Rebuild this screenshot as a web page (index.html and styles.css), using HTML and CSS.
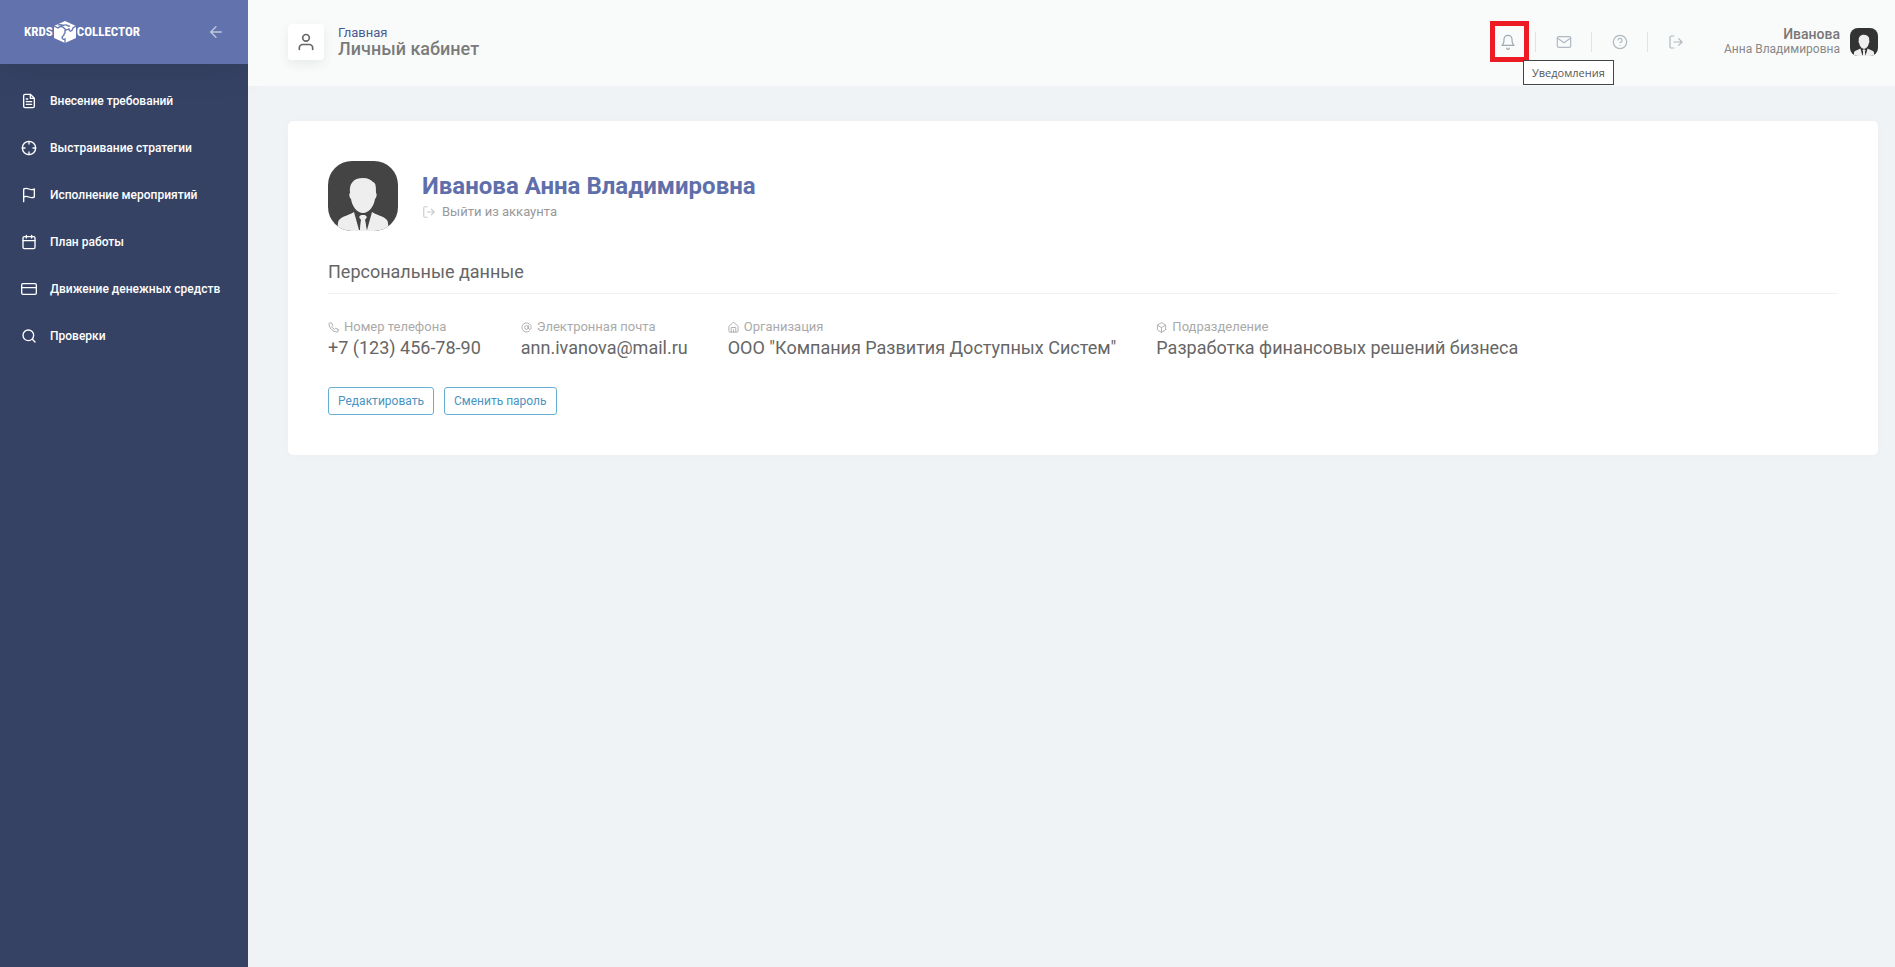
FILE: index.html
```html
<!DOCTYPE html>
<html lang="ru">
<head>
<meta charset="utf-8">
<title>Личный кабинет</title>
<link rel="stylesheet" href="styles.css">
</head>
<body>
<svg class="defs" width="0" height="0" aria-hidden="true">
  <symbol id="avatar" viewBox="0 0 70 70">
    <path class="portrait" d="M35 17c5 0 8 2 10 4 3 1 3 5 3 11 1 0 1 4-1 6-1 7-6 14-12 14s-11-7-12-14c-2-2-2-6-1-6-1-9 3-15 13-15z"/>
    <path class="portrait" d="M26 51l5 18h1l1-10-2-3 2-2h4l2 2-2 3 1 10h1l5-18c4 3 12 4 15 8 2 3 1 11 1 11H10s-1-8 1-11c3-4 11-5 15-8z"/>
    <path class="portrait" d="M33 59h4l2 11h-7z"/>
  </symbol>
  <symbol id="logout" viewBox="0 0 24 24"><path d="M9 21H5a2 2 0 0 1-2-2V5a2 2 0 0 1 2-2h4M16 17l5-5-5-5M21 12H9"/></symbol>
</svg>
<div class="app">
  <aside class="sidebar">
    <div class="brand">
      <a class="logo" href="#"><span>KRDS</span>
        <svg class="cube" viewBox="0 0 22 22" aria-hidden="true">
          <path class="cube-face" d="M11 0l11 5v12l-11 5-11-5V5z"/>
          <path class="cube-line" d="M0 5l4 2c2-2 4-2 6 0l2 2 3-1c0 3 3 3 4-1l3-2M4 4c3-1 4 1 7 0s2 2 5 1M11 22v-4c-2 1-4-1-2-3 2-1 0-2 2-3V9"/>
        </svg><span>COLLECTOR</span></a>
      <button class="collapse" type="button" aria-label="Свернуть меню"><svg class="icon" viewBox="0 0 24 24"><path d="M20 12H4M12 20l-8-8 8-8"/></svg></button>
    </div>
    <nav class="menu">
      <a href="#"><svg class="icon" viewBox="0 0 24 24"><path d="M14 2H6a2 2 0 0 0-2 2v16a2 2 0 0 0 2 2h12a2 2 0 0 0 2-2V8zM14 2v6h6M16 13H8M16 17H8M10 9H8"/></svg>Внесение требований</a>
      <a href="#"><svg class="icon" viewBox="0 0 24 24"><circle cx="12" cy="12" r="10"/><path d="M22 12h-4M6 12H2M12 6V2M12 22v-4"/></svg>Выстраивание стратегии</a>
      <a href="#"><svg class="icon" viewBox="0 0 24 24"><path d="M4 15s1-1 4-1 5 2 8 2 4-1 4-1V3s-1 1-4 1-5-2-8-2-4 1-4 1zM4 22v-7"/></svg>Исполнение мероприятий</a>
      <a href="#"><svg class="icon" viewBox="0 0 24 24"><rect x="3" y="4" width="18" height="18" rx="2"/><path d="M16 2v4M8 2v4M3 10h18"/></svg>План работы</a>
      <a href="#"><svg class="icon" viewBox="0 0 24 24"><rect x="1" y="4" width="22" height="16" rx="2"/><path d="M1 10h22"/></svg>Движение денежных средств</a>
      <a href="#"><svg class="icon" viewBox="0 0 24 24"><circle cx="11" cy="11" r="8"/><path d="M21 21l-4-4"/></svg>Проверки</a>
    </nav>
  </aside>
  <div class="page">
    <header class="topbar">
      <div class="page-icon"><svg class="icon" viewBox="0 0 24 24"><path d="M20 21v-2a4 4 0 0 0-4-4H8a4 4 0 0 0-4 4v2"/><circle cx="12" cy="7" r="4"/></svg></div>
      <div class="heading">
        <a href="#">Главная</a>
        <h1>Личный кабинет</h1>
      </div>
      <div class="actions">
        <button class="marked" type="button" aria-label="Уведомления"><svg class="icon" viewBox="0 0 24 24"><path d="M18 8A6 6 0 0 0 6 8c0 7-3 9-3 9h18s-3-2-3-9M14 21a2 2 0 0 1-4 0"/></svg><span class="tooltip" role="tooltip">Уведомления</span></button>
        <button type="button" aria-label="Сообщения"><svg class="icon" viewBox="0 0 24 24"><rect x="2" y="4" width="20" height="16" rx="2"/><path d="M22 6l-10 7L2 6"/></svg></button>
        <button type="button" aria-label="Помощь"><svg class="icon" viewBox="0 0 24 24"><circle cx="12" cy="12" r="10"/><path d="M9 9a3 3 0 0 1 6 1c0 2-3 3-3 3M12 17h.01"/></svg></button>
        <button type="button" aria-label="Выйти"><svg class="icon" viewBox="0 0 24 24"><use href="#logout"/></svg></button>
      </div>
      <a class="user" href="#">
        <span class="user-name"><strong>Иванова</strong><span>Анна Владимировна</span></span>
        <svg class="avatar avatar-small" viewBox="0 0 70 70"><use href="#avatar"/></svg>
      </a>
    </header>
    <main class="card">
      <section class="profile">
        <svg class="avatar avatar-large" viewBox="0 0 70 70"><use href="#avatar"/></svg>
        <div>
          <h2>Иванова Анна Владимировна</h2>
          <a class="exit" href="#"><svg class="icon" viewBox="0 0 24 24"><use href="#logout"/></svg>Выйти из аккаунта</a>
        </div>
      </section>
      <h3>Персональные данные</h3>
      <dl class="details">
        <div><dt><svg class="icon" viewBox="0 0 24 24"><path d="M22 17v3a2 2 0 0 1-2 2A19 19 0 0 1 2 4a2 2 0 0 1 2-2h3a2 2 0 0 1 2 2l1 3a2 2 0 0 1-.5 2L8 10a16 16 0 0 0 6 6l1-1.500a2 2 0 0 1 2-.5l3 1a2 2 0 0 1 2 2z"/></svg>Номер телефона</dt><dd>+7 (123) 456-78-90</dd></div>
        <div><dt><svg class="icon" viewBox="0 0 24 24"><circle cx="12" cy="12" r="4"/><path d="M16 8v5a3 3 0 0 0 6 0v-1a10 10 0 1 0-4 8"/></svg>Электронная почта</dt><dd>ann.ivanova@mail.ru</dd></div>
        <div><dt><svg class="icon" viewBox="0 0 24 24"><path d="M2 10a3 3 0 0 1 1-2l7-6a3 3 0 0 1 4 0l7 6a3 3 0 0 1 1 2v10a2 2 0 0 1-2 2H4a2 2 0 0 1-2-2zM7 22V12h10v10M12 17v5"/></svg>Организация</dt><dd>ООО "Компания Развития Доступных Систем"</dd></div>
        <div><dt><svg class="icon" viewBox="0 0 24 24"><path d="M21 16V8a2 2 0 0 0-1-2l-7-4a2 2 0 0 0-2 0L4 6a2 2 0 0 0-1 2v8a2 2 0 0 0 1 2l7 4a2 2 0 0 0 2 0l7-4a2 2 0 0 0 1-2zM3 7l9 5 9-5M12 22V12"/></svg>Подразделение</dt><dd>Разработка финансовых решений бизнеса</dd></div>
      </dl>
      <div class="buttons">
        <button type="button">Редактировать</button>
        <button type="button">Сменить пароль</button>
      </div>
    </main>
  </div>
</div>
</body>
</html>
```
FILE: styles.css
```css
*, *::before { box-sizing: border-box; }
body {
  margin: 0;
  background: #eff3f6;
  color: #666;
  font: 13px/16px Roboto, "Noto Sans", sans-serif;
}
a { color: inherit; text-decoration: none; }
button { font: inherit; color: inherit; background: none; border: 0; padding: 0; cursor: pointer; }
h1, h2, h3, dl, dd { margin: 0; }
.defs { position: absolute; }
.icon {
  flex: none;
  width: 16px;
  height: 16px;
  fill: none;
  stroke: currentColor;
  stroke-width: 2;
  stroke-linecap: round;
  stroke-linejoin: round;
}
.app { display: flex; min-height: 100vh; }

.sidebar { flex: none; width: 248px; background: #364264; color: #fff; }
.brand {
  display: flex;
  align-items: center;
  justify-content: space-between;
  height: 64px;
  padding: 0 24px;
  background: #6272ac;
  box-shadow: 0 0 40px rgba(0, 0, 0, .1);
}
.logo {
  display: flex;
  align-items: center;
  gap: 1px;
  font: bold 13px/16px "Roboto Condensed", "Open Sans Condensed", "Liberation Sans Narrow", Roboto, sans-serif;
}
.cube { width: 22px; height: 22px; }
.cube-face { fill: #fff; }
.cube-line { fill: none; stroke: #6272ac; stroke-width: 1.3; }
.collapse { display: flex; color: #c0c7de; }
.menu { padding-top: 13px; }
.menu a {
  display: flex;
  align-items: center;
  gap: 13px;
  height: 47px;
  padding-left: 21px;
  font-size: 12px;
  font-weight: 500;
}

.page { flex: 1; min-width: 0; }
.topbar {
  display: flex;
  align-items: center;
  height: 86px;
  padding: 0 17px 2px 40px;
  background: #f9fbfb;
}
.page-icon {
  display: grid;
  place-items: center;
  width: 36px;
  height: 36px;
  margin-right: 14px;
  border-radius: 4px;
  background: #fff;
  box-shadow: 0 4px 12px rgba(0, 0, 0, .07);
}
.page-icon .icon { width: 20px; height: 20px; }
.heading { padding-bottom: 2px; }
.heading a { display: block; color: #4b5a92; }
.heading h1 { font-size: 18px; line-height: 16px; font-weight: 500; color: #7b7b7b; }
.actions { display: flex; margin-left: auto; color: #b0b9c1; }
.actions button {
  position: relative;
  display: grid;
  place-items: center;
  width: 56px;
  height: 20px;
  border-right: 1px solid #dfe3e5;
}
.actions button:last-child { border-color: transparent; }
.actions .icon { stroke-width: 1.8; }
.actions .marked { color: #9da9b2; }
.marked::before {
  content: "";
  position: absolute;
  top: -11px;
  left: 10px;
  width: 39px;
  height: 41px;
  border: 5px solid #ed1c24;
}
.tooltip {
  position: absolute;
  top: 28px;
  left: 43px;
  z-index: 1;
  padding: 4px 8px;
  border: 1px solid #444;
  background: #fff;
  color: #575757;
  font: 11px/15px "Open Sans", "Noto Sans", sans-serif;
}
.user { display: flex; align-items: center; gap: 10px; margin-left: 20px; }
.user-name { display: grid; padding-bottom: 2px; text-align: right; font-size: 12px; line-height: 14px; color: #888; }
.user-name strong { font-size: 14px; line-height: 16px; font-weight: 500; color: #777; }
.avatar { flex: none; background: #444; }
.avatar-small { width: 28px; height: 28px; border-radius: 8px; background: #333; }
.avatar-large { width: 70px; height: 70px; border-radius: 24px; }
.portrait { fill: #eee; }

.card {
  margin: 35px 17px 0 40px;
  padding: 40px;
  border-radius: 5px;
  background: #fff;
  box-shadow: 0 0 12px rgba(0, 0, 0, .02);
}
.profile { display: flex; align-items: center; gap: 24px; }
.profile h2 { font-size: 24px; line-height: 32px; font-weight: 700; color: #5f6fab; }
.exit { display: flex; align-items: center; gap: 6px; line-height: 20px; color: #999; }
.exit .icon { width: 14px; height: 14px; color: #c8ccd0; }
.card h3 {
  margin-top: 28px;
  padding-bottom: 8px;
  border-bottom: 1px solid #f2f2f2;
  font-size: 18px;
  line-height: 26px;
  font-weight: 400;
}
.details { display: flex; flex-wrap: wrap; gap: 20px 40px; margin-top: 25px; }
.details dt { display: flex; align-items: center; gap: 5px; color: #aaa; }
.details .icon { width: 11px; height: 11px; }
.details dd { font-size: 18px; line-height: 26px; }
.buttons { display: flex; gap: 10px; margin-top: 26px; }
.buttons button {
  height: 28px;
  padding: 0 9px;
  border: 1px solid #67aed5;
  border-radius: 3px;
  color: #4a94c2;
  font-size: 12px;
}
```
